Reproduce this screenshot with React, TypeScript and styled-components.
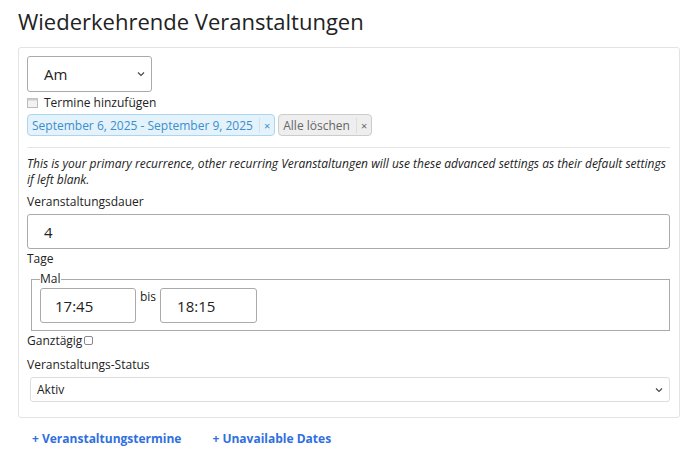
import React from "react";
import styled, { createGlobalStyle } from "styled-components";

const G = createGlobalStyle`
  body { margin: 0; font-family: "Open Sans", sans-serif; color: #222; background: #fff; }
`;
const Page = styled.div`padding: 6px 20px 0 18px; width: 700px; box-sizing: border-box;`;
const Title = styled.h1`font-size: 22px; font-weight: 400; margin: 0 0 11px; line-height: 30px;`;
const Card = styled.div`border: 1px solid #e3e3e3; border-radius: 3px; padding: 8px 9px 15px 8px; display: flex; flex-direction: column;`;
const SelectBox = styled.div<{ w?: string; h: number; fs: number; pl: number }>`
  width: ${p => p.w || "100%"}; height: ${p => p.h}px; box-sizing: border-box;
  border: 1px solid #aaa; border-radius: 3px; display: flex; align-items: center; justify-content: space-between;
  padding: 0 6px 0 ${p => p.pl}px; font-size: ${p => p.fs}px;
`;
const Row = styled.div`display: flex; align-items: center; gap: 6px; font-size: 12px; margin-top: 2px;`;
const Tags = styled.div`display: flex; gap: 3px; margin-top: 3px;`;
const Tag = styled.span<{ blue?: boolean }>`
  font-size: 12px; height: 20px; display: flex; align-items: center; padding: 0 4px; border-radius: 4px;
  border: 1px solid ${p => p.blue ? "#aed5f0" : "#ccc"}; background: ${p => p.blue ? "#e4f2fb" : "#eee"};
  color: ${p => p.blue ? "#3a8fcc" : "#666"}; gap: 6px;
  b { font-weight: 400; font-size: 11px; padding-left: 4px; border-left: 1px solid ${p => p.blue ? "#cfe4f3" : "#ddd"}; }
`;
const Hr = styled.hr`border: 0; border-top: 1px solid #e5e5e5; margin: 11px 0 8px; width: 100%;`;
const Note = styled.p`font-style: italic; font-size: 12px; line-height: 16px; margin: 0 0 4px;`;
const Label = styled.div`font-size: 12px; line-height: 16px; margin: 2px 0 4px;`;
const Input = styled.div<{ w?: string }>`
  width: ${p => p.w || "100%"}; height: 35px; box-sizing: border-box; border: 1px solid #aaa; border-radius: 3px;
  display: flex; align-items: center; padding-left: 16px; font-size: 15px;
`;
const Fieldset = styled.fieldset`margin: 2px 0 0 4px; border: 1px solid #aaa; padding: 3px 8px 7px 8px; display: flex; align-items: flex-start; gap: 4px; font-size: 12px;`;
const Legend = styled.legend`padding: 0; font-size: 12px; line-height: 12px;`;
const Check = styled.span`display: inline-block; width: 7px; height: 7px; border: 1px solid #888; border-radius: 2px; margin-left: 2px;`;
const Links = styled.div`display: flex; gap: 31px; padding: 12px 14px; font-size: 12px; font-weight: 700; color: #2f6fe0;`;

const Chev = () => (
  <svg width="8" height="6" viewBox="0 0 8 6"><path d="M1 1.5l3 3 3-3" stroke="#444" fill="none" strokeWidth="1.1" /></svg>
);
const Cal = () => (
  <svg width="11" height="11" viewBox="0 0 11 11"><rect x="0.5" y="1.5" width="10" height="9" fill="#f2f2f2" stroke="#bbb" /><rect x="0.5" y="1.5" width="10" height="2" fill="#ccc" /></svg>
);

export default function App() {
  return (
    <Page>
      <G />
      <Title>Wiederkehrende Veranstaltungen</Title>
      <Card>
        <SelectBox w="125px" h={36} fs={15} pl={16}>Am<Chev /></SelectBox>
        <Row><Cal />Termine hinzufügen</Row>
        <Tags>
          <Tag blue>September 6, 2025 - September 9, 2025<b>×</b></Tag>
          <Tag>Alle löschen<b>×</b></Tag>
        </Tags>
        <Hr />
        <Note>This is your primary recurrence, other recurring Veranstaltungen will use these advanced settings as their default settings if left blank.</Note>
        <Label>Veranstaltungsdauer</Label>
        <Input>4</Input>
        <Label>Tage</Label>
        <Fieldset>
          <Legend>Mal</Legend>
          <Input w="96px" style={{ paddingLeft: 14 }}>17:45</Input>
          <span>bis</span>
          <Input w="97px">18:15</Input>
        </Fieldset>
        <Label>Ganztägig<Check /></Label>
        <Label style={{ marginTop: 4 }}>Veranstaltungs-Status</Label>
        <SelectBox h={25} fs={12} pl={6} style={{ marginLeft: 3, width: "auto", border: "1px solid #ddd" }}>Aktiv<Chev /></SelectBox>
      </Card>
      <Links><span>+ Veranstaltungstermine</span><span>+ Unavailable Dates</span></Links>
    </Page>
  );
}
